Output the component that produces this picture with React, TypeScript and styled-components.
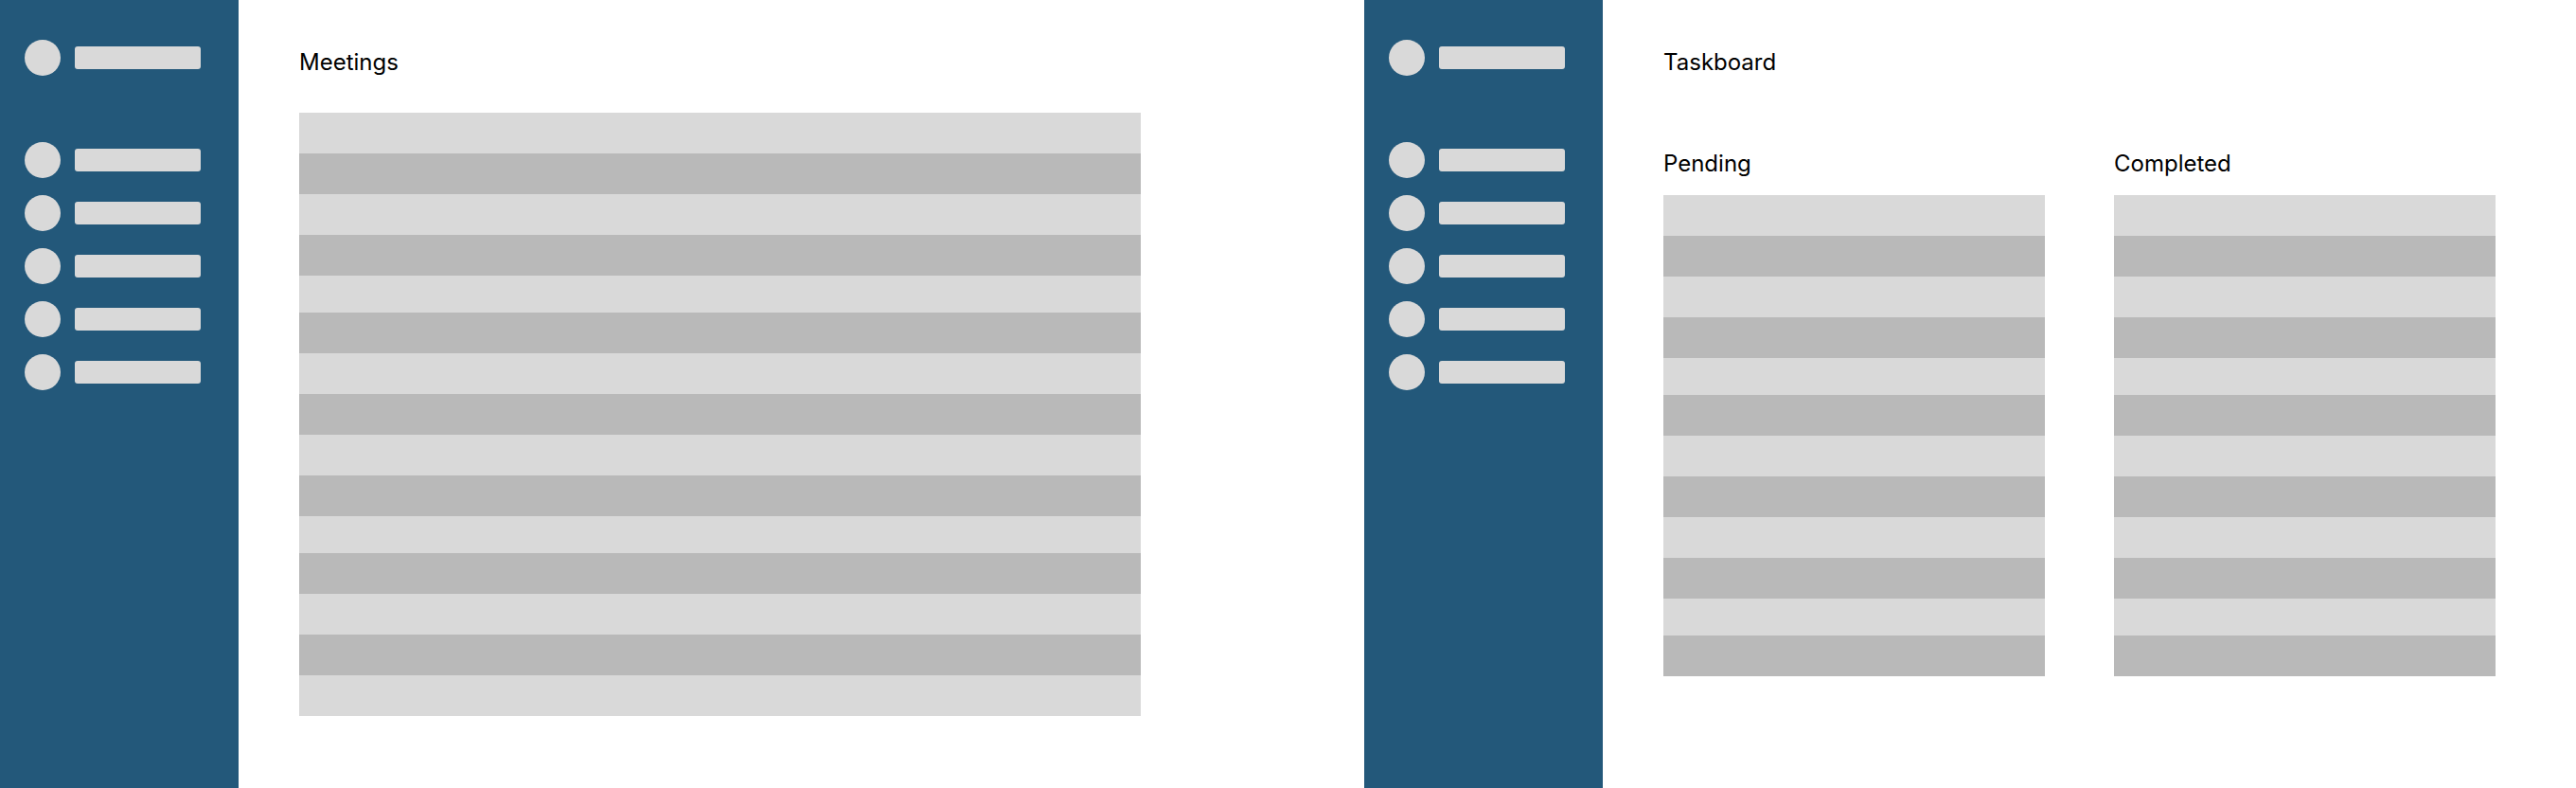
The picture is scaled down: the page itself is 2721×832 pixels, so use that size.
import React from "react";
import styled, { createGlobalStyle } from "styled-components";

const GlobalStyle = createGlobalStyle`
  html, body {
    margin: 0;
    padding: 0;
    background: #ffffff;
  }
  body {
    font-family: Inter, "Noto Sans", "Liberation Sans", sans-serif;
    color: #000000;
  }
`;

const Canvas = styled.div`
  display: flex;
  width: 2721px;
  height: 832px;
  overflow: hidden;
  background: #ffffff;
`;

const Screen = styled.div<{ $width: number }>`
  display: flex;
  flex: 0 0 ${(p) => p.$width}px;
  width: ${(p) => p.$width}px;
  height: 100%;
`;

const Sidebar = styled.nav`
  flex: 0 0 252px;
  width: 252px;
  height: 100%;
  box-sizing: border-box;
  background: #23587a;
  padding: 42px 0 0 26px;
  display: flex;
  flex-direction: column;
`;

const NavGroup = styled.div`
  display: flex;
  flex-direction: column;
  gap: 18px;
  margin-top: 70px;
`;

const NavRow = styled.div`
  display: flex;
  align-items: center;
  gap: 15px;
  height: 38px;
`;

const Avatar = styled.span`
  width: 38px;
  height: 38px;
  border-radius: 50%;
  background: #d9d9d9;
  flex: 0 0 38px;
`;

const Pill = styled.span`
  width: 133px;
  height: 24px;
  border-radius: 3px;
  background: #d9d9d9;
`;

const Content = styled.main`
  flex: 1;
  box-sizing: border-box;
  padding: 51px 0 0 64px;
  display: flex;
  flex-direction: column;
  align-items: flex-start;
`;

const Title = styled.h1`
  margin: 0;
  font-size: 24px;
  line-height: 29px;
  font-weight: 400;
  letter-spacing: 0;
`;

const Table = styled.div<{ $width: number; $offset: number }>`
  display: flex;
  flex-direction: column;
  width: ${(p) => p.$width}px;
  margin-top: ${(p) => p.$offset}px;
`;

const Row = styled.div<{ $dark: boolean; $short: boolean }>`
  height: ${(p) => (p.$short ? 39 : 43)}px;
  background: ${(p) => (p.$dark ? "#b9b9b9" : "#d9d9d9")};
`;

const Columns = styled.div`
  display: flex;
  gap: 73px;
  margin-top: 78px;
`;

const Column = styled.section`
  display: flex;
  flex-direction: column;
  width: 403px;
`;

const ColumnLabel = styled.h2`
  margin: 0;
  font-size: 24px;
  line-height: 29px;
  font-weight: 400;
`;

const NavBar = () => (
  <Sidebar>
    <NavRow>
      <Avatar />
      <Pill />
    </NavRow>
    <NavGroup>
      {[0, 1, 2, 3, 4].map((i) => (
        <NavRow key={i}>
          <Avatar />
          <Pill />
        </NavRow>
      ))}
    </NavGroup>
  </Sidebar>
);

const StripedTable = ({ rows, width, offset }: { rows: number; width: number; offset: number }) => (
  <Table $width={width} $offset={offset}>
    {Array.from({ length: rows }).map((_, i) => (
      <Row key={i} $dark={i % 2 === 1} $short={i === 4 || i === 10} />
    ))}
  </Table>
);

export default function App() {
  return (
    <>
      <GlobalStyle />
      <Canvas>
        <Screen $width={1441}>
          <NavBar />
          <Content>
            <Title>Meetings</Title>
            <StripedTable rows={15} width={889} offset={39} />
          </Content>
        </Screen>
        <Screen $width={1280}>
          <NavBar />
          <Content>
            <Title>Taskboard</Title>
            <Columns>
              <Column>
                <ColumnLabel>Pending</ColumnLabel>
                <StripedTable rows={12} width={403} offset={19} />
              </Column>
              <Column>
                <ColumnLabel>Completed</ColumnLabel>
                <StripedTable rows={12} width={403} offset={19} />
              </Column>
            </Columns>
          </Content>
        </Screen>
      </Canvas>
    </>
  );
}
